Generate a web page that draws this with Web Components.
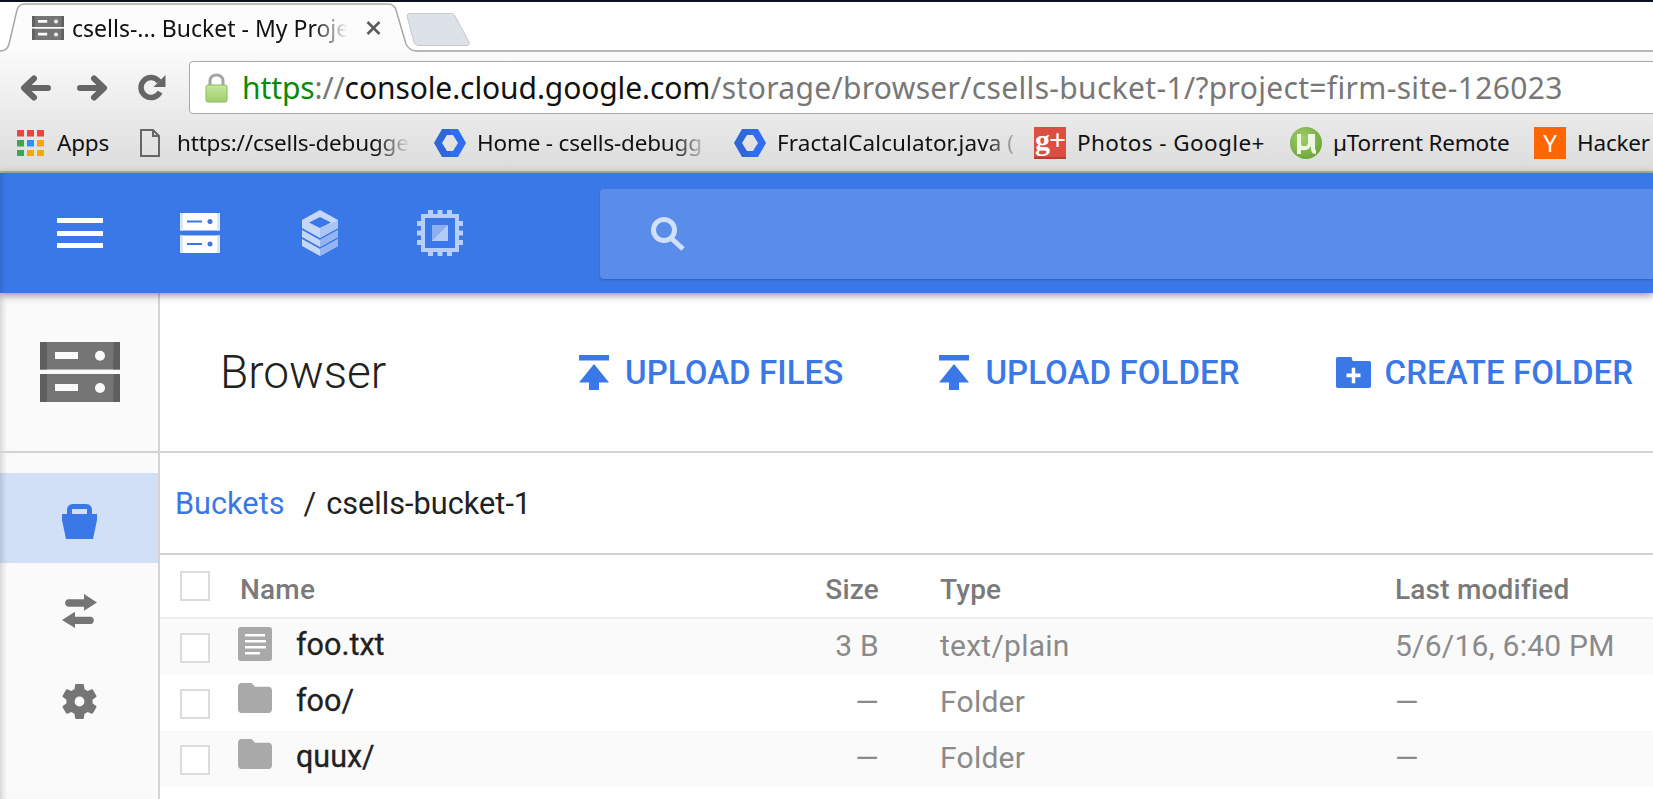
<!DOCTYPE html>
<html>
<head>
<meta charset="utf-8">
<title>csells-bucket-1 Bucket - My Project</title>
<style>
html, body { margin: 0; height: 100%; overflow: hidden; background: #fff; }
</style>
</head>
<body>
<browser-chrome></browser-chrome>
<console-topbar></console-topbar>
<console-main>
	<page-header slot="header"></page-header>
	<bucket-crumbs slot="crumbs"></bucket-crumbs>
	<file-table slot="table">
		<file-row kind="file" name="foo.txt" size="3 B" type="text/plain" modified="5/6/16, 6:40 PM" odd></file-row>
		<file-row kind="folder" name="foo/" size="—" type="Folder" modified="—"></file-row>
		<file-row kind="folder" name="quux/" size="—" type="Folder" modified="—" odd></file-row>
	</file-table>
</console-main>

<script>
const blue = '#3b78e7';
const FOLDER = 'M10 4H4c-1.1 0-2 .9-2 2v12c0 1.1.9 2 2 2h16c1.1 0 2-.9 2-2V8c0-1.1-.9-2-2-2h-8z';

const hexagon = `<svg width="32" height="28" viewBox="0 0 32 28">
	<path fill="#2f67d8" d="M8 0h8v6h-3l-5 8 5 8h3v6H8L0 14z"/>
	<path fill="#2f6ef0" d="M16 0h8l8 14-8 14h-8v-6h3l5-8-5-8h-3z"/>
</svg>`;

const icons = {
	server: `<svg width="40" height="40" viewBox="0 0 40 40">
		<path fill="#fff" d="M0 0h40v17.500H0zM0 22.500h40V40H0z"/>
		<path fill="#dbe6fb" d="M0 0h3v17.500H0zM37 0h3v17.500h-3zM0 22.500h3V40H0zM37 22.500h3V40h-3z"/>
		<path fill="${blue}" d="M7 7.500h15v2H7zM7 30h15v2H7z"/>
		<circle fill="${blue}" cx="30" cy="8.500" r="2.500"/><circle fill="${blue}" cx="30" cy="31" r="2.500"/>
	</svg>`,
	stack: `<svg width="36" height="46" viewBox="0 0 36 46">
		<path fill="#c6d8f9" d="M18 0l18 10v8L18 28 0 18v-8zm0 7L7 12.500 18 18l11-5.500z"/>
		<path fill="#a9c4f5" d="M18 28v-10l18-7.500V18z"/>
		<path fill="#c6d8f9" d="M0 20l18 10 18-10v7L18 37 0 27z"/>
		<path fill="#94b4f2" d="M18 30l18-10v7L18 37z"/>
		<path fill="#c6d8f9" d="M0 29l18 10 18-10v7L18 46 0 36z"/>
		<path fill="#94b4f2" d="M18 39l18-10v7L18 46z"/>
	</svg>`,
	chip: `<svg width="46" height="46" viewBox="0 0 46 46">
		<path fill="#b7cef8" d="M11 0h5v5h-5zM20.500 0h5v5h-5zM30 0h5v5h-5zM11 41h5v5h-5zM20.500 41h5v5h-5zM30 41h5v5h-5zM0 11h5v5H0zM0 20.500h5v5H0zM0 30h5v5H0zM41 11h5v5h-5zM41 20.500h5v5h-5zM41 30h5v5h-5z"/>
		<path fill="#b7cef8" d="M4 4h38v38H4zm4 4v30h30V8z"/>
		<path fill="#b3cbf7" d="M15 15h16v16H15z"/>
		<path fill="#8fb0f0" d="M15 15h16L15 31z"/>
	</svg>`,
	search: `<svg width="34" height="34" viewBox="0 0 34 34">
		<circle cx="13" cy="13" r="10.500" fill="none" stroke="#d1e0fa" stroke-width="5"/>
		<path d="M20 21l12 11" fill="none" stroke="#d1e0fa" stroke-width="5"/>
	</svg>`,
	upload: `<svg width="30" height="35" viewBox="0 0 30 35">
		<path fill="${blue}" d="M0 0h30v5.500H0zM15 9l15 18.500H20V35H10v-7.500H0z"/>
	</svg>`,
	createFolder: `<svg width="35" height="31" viewBox="2 4 20 16" preserveAspectRatio="none">
		<path fill="${blue}" d="M10 4H3c-.6 0-1 .4-1 1v14c0 .6.4 1 1 1h18c.6 0 1-.4 1-1V7c0-.6-.4-1-1-1h-9.500l-.5-1.500C11.300 4.200 10.700 4 10 4z"/>
		<path fill="#fff" d="M11 9.500h2v3h3v2h-3v3h-2v-3H8v-2h3z"/>
	</svg>`,
	bucket: `<svg width="35" height="35" viewBox="0 0 35 35">
		<path fill="${blue}" d="M5 10V6c0-3 2-6 6-6h13c4 0 6 3 6 6v4h5v6l-4 19H4L0 16v-6zM10 10h15V5H10z"/>
	</svg>`,
	swap: `<svg width="35" height="34" viewBox="0 0 35 34">
		<path fill="#757575" d="M6.500 5.300H22V0l13 8.500-13 8.200v-4H6.500c-4.500 0-4.500-7.400 0-7.400zM28.500 22.700H13v-5L0 26l13 8v-4h15.500c4.500 0 4.500-7.300 0-7.300z"/>
	</svg>`,
	gear: `<svg width="35" height="35" viewBox="2.400 2 19.200 20">
		<path fill="#757575" d="M19.430 12.980c.04-.32.07-.64.07-.98s-.03-.66-.07-.98l2.110-1.650c.19-.15.24-.42.12-.64l-2-3.460c-.12-.22-.39-.3-.61-.22l-2.490 1c-.52-.4-1.080-.73-1.690-.98l-.38-2.650C14.460 2.180 14.250 2 14 2h-4c-.25 0-.46.18-.49.42l-.38 2.650c-.61.25-1.170.59-1.690.98l-2.490-1c-.23-.09-.49 0-.61.22l-2 3.460c-.13.22-.07.49.12.64l2.110 1.650c-.04.32-.07.65-.07.98s.03.66.07.98l-2.110 1.650c-.19.15-.24.42-.12.64l2 3.460c.12.22.39.3.61.22l2.490-1c.52.4 1.080.73 1.690.98l.38 2.650c.03.24.24.42.49.42h4c.25 0 .46-.18.49-.42l.38-2.650c.61-.25 1.170-.59 1.690-.98l2.490 1c.23.09.49 0 .61-.22l2-3.460c.12-.22.07-.49-.12-.64l-2.110-1.650zM12 14.800a2.800 2.800 0 1 1 0-5.600 2.800 2.800 0 0 1 0 5.600z"/>
	</svg>`,
	file: `<svg width="34" height="34" viewBox="0 0 34 34">
		<rect width="34" height="34" rx="3" fill="#a9a9a9"/>
		<path fill="#fff" d="M7 7h20v2.500H7zM7 13h21v2.500H7zM7 19h21v2.500H7zM7 25h15v2.500H7z"/>
	</svg>`,
	folder: `<svg width="34" height="30" viewBox="2 4 20 16" preserveAspectRatio="none">
		<path fill="#a9a9a9" d="${FOLDER}"/>
	</svg>`
};

// favicon of the tab and the big icon in the page header are the same picture
function storageMark(width, height) {
	return `<svg width="${width}" height="${height}" viewBox="0 0 80 60">
		<path fill="#757575" d="M0 0h80v27.500H0zM0 32h80v28H0z"/>
		<path fill="#5f5f5f" d="M0 0h7v27.500H0zM0 32h7v28H0zM74 0h6v27.500h-7zM74 32h6v28h-7z"/>
		<path fill="#fafafa" d="M15 10h23v7H15zM15 42h23v7H15z"/>
		<circle fill="#fafafa" cx="60" cy="13.700" r="5"/><circle fill="#fafafa" cx="60" cy="46" r="5"/>
	</svg>`;
}

class BrowserChrome extends HTMLElement {
	constructor() {
		super();
		this.attachShadow({mode: 'open'}).innerHTML = `
	<style>
	:host {
		display: block;
		height: 173px;
		font-family: "Noto Sans", "Open Sans", sans-serif;
		color: #111;
	}
	.strip {
		display: flex;
		height: 48px;
		border-top: 2px solid #0a101c;
		border-bottom: 2px solid #b9b9b9;
		background: #fff;
		position: relative;
	}
	.tabshape {
		position: absolute;
		left: 0;
		top: 0;
	}
	.tab {
		position: relative;
		box-sizing: border-box;
		width: 406px;
		display: flex;
		align-items: center;
		padding: 3px 0 0 32px;
		flex: none;
	}
	.title {
		width: 281px;
		margin-left: 8px;
		font-size: 23px;
		white-space: nowrap;
		overflow: hidden;
		-webkit-mask-image: linear-gradient(to right, #000 86%, transparent 98%);
	}
	.close {
		margin-left: 13px;
		line-height: 0;
	}
	.newtab {
		margin-top: 11px;
		flex: none;
	}
	.tools {
		background: linear-gradient(#fafafa, #dcdcdc);
		height: 119px;
		border-bottom: 2px solid #b4b4b4;
	}
	.nav {
		display: flex;
		align-items: center;
		height: 62px;
		box-sizing: border-box;
		padding: 9px 0 0 20px;
		overflow: hidden;
	}
	.nav svg {
		flex: none;
		margin-right: 26px;
	}
	.omni {
		flex: none;
		box-sizing: border-box;
		width: 1500px;
		height: 53px;
		margin-left: 23px;
		display: flex;
		align-items: center;
		padding-left: 15px;
		background: #fff;
		border: 1px solid #a9a9a9;
		border-radius: 4px;
		font-size: 30px;
		white-space: nowrap;
		letter-spacing: -.1px;
	}
	.omni svg {
		margin-right: 14px;
	}
	.green { color: #0a8a0a; }
	.grey { color: #777; }
	.path { letter-spacing: .33px; }
	.bookmarks {
		display: flex;
		height: 57px;
		align-items: center;
		padding-left: 17px;
		overflow: hidden;
	}
	.gplus {
		width: 32px;
		height: 32px;
		background: #dc4e41;
		color: #fff;
		font: bold 30px/25px "Liberation Serif", serif;
		letter-spacing: -1px;
		text-align: center;
		box-shadow: inset 0 -2px 0 #b5402f;
	}
	.hn {
		width: 32px;
		height: 32px;
		background: #ff6600;
		color: #fff;
		font: 24px/32px "Noto Sans", sans-serif;
		text-align: center;
	}
	</style>
	<div class="strip">
		<svg class="tabshape" width="418" height="50" viewBox="0 0 418 50">
			<path d="M0 49c5 0 8-3 9-7L17 8c1-4 4-6 8-6h363c4 0 7 2 8 6l10 34c2 4 6 7 11 7v1H0z" fill="#fcfcfc"/>
			<path d="M0 49c5 0 8-3 9-7L17 8c1-4 4-6 8-6h363c4 0 7 2 8 6l10 34c2 4 6 7 11 7" fill="none" stroke="#a8a8a8" stroke-width="1.500"/>
		</svg>
		<div class="tab">
			${storageMark(32, 24)}
			<div class="title">csells-... Bucket - My Proje</div>
			<div class="close"><svg width="15" height="14" viewBox="0 0 15 14"><path d="M1.500 1l12 12M13.500 1l-12 12" stroke="#5a5a5a" stroke-width="2.500"/></svg></div>
		</div>
		<svg class="newtab" width="65" height="33" viewBox="0 0 65 33">
			<path d="M1 3c0-1.500 1-2.500 3-2.500h41c2 0 3.500 1 4 2.500l14 26c.5 2 0 3.500-2 3.500H13c-2 0-4-1-5-3z" fill="#dde1e8" stroke="#c6c8cc"/>
		</svg>
	</div>
	<div class="tools">
		<div class="nav">
			<svg width="31" height="26" viewBox="0 0 31 26"><path d="M28 13H5M14 3.500L4 13l10 9.500" fill="none" stroke="#666" stroke-width="6" stroke-linecap="round" stroke-linejoin="round"/></svg>
			<svg width="31" height="26" viewBox="0 0 31 26"><path d="M3 13h23M17 3.500L27 13l-10 9.500" fill="none" stroke="#666" stroke-width="6" stroke-linecap="round" stroke-linejoin="round"/></svg>
			<svg style="margin:0 0 0 4px" width="28" height="28" viewBox="0 0 28 28"><path d="M22 18a10 10 0 1 1-1-10.500" fill="none" stroke="#666" stroke-width="5.500"/><path d="M27.500 1v12h-12z" fill="#666"/></svg>
			<div class="omni">
				<svg width="23" height="30" viewBox="0 0 23 30">
					<defs><linearGradient id="lock" x1="0" y1="0" x2="0" y2="1"><stop offset="0" stop-color="#c4e89c"/><stop offset="1" stop-color="#a0d06c"/></linearGradient></defs>
					<path d="M5 13V8c0-8 13-8 13 0v5" fill="none" stroke="#a4a4a4" stroke-width="3"/>
					<rect x="1" y="12" width="21" height="17" rx="2" fill="url(#lock)" stroke="#8cb860"/>
				</svg>
				<span class="green">https</span><span class="grey">://</span><span>console.cloud.google.com</span><span class="grey path">/storage/browser/csells-bucket-1/?project=firm-site-126023</span>
			</div>
		</div>
		<div class="bookmarks">
			<book-mark width="123" gap="13" label="Apps">
				<svg width="27" height="26" viewBox="0 0 27 26">
					<path fill="#f44336" d="M0 0h7v6.500H0zM10 0h7v6.500h-7zM20 0h7v6.500h-7z"/>
					<path fill="#34a853" d="M0 10h7v6.500H0zM0 20h7v6.500H0z"/>
					<path fill="#2196f3" d="M10 10h7v6.500h-7z"/>
					<path fill="#f9a602" d="M20 10h7v6.500h-7zM10 20h7v6.500h-7zM20 20h7v6.500h-7z"/>
				</svg>
			</book-mark>
			<book-mark width="294" gap="17" text="233" fade label="https://csells-debugge">
				<svg width="20" height="28" viewBox="0 0 20 28"><path d="M1 1h12l6 6v20H1zM13 1v6h6" fill="none" stroke="#666" stroke-width="2"/></svg>
			</book-mark>
			<book-mark width="300" gap="11" text="231" fade label="Home - csells-debugg">${hexagon}</book-mark>
			<book-mark width="300" gap="11" text="245" fade spacing=".1" label="FractalCalculator.java (">${hexagon}</book-mark>
			<book-mark width="256" gap="11" spacing=".4" label="Photos - Google+"><div class="gplus">g+</div></book-mark>
			<book-mark width="244" gap="11" label="µTorrent Remote">
				<svg width="32" height="32" viewBox="0 0 32 32">
					<defs><radialGradient id="ball" cx=".4" cy=".35" r=".7"><stop offset="0" stop-color="#a3cf6c"/><stop offset="1" stop-color="#6aa436"/></radialGradient></defs>
					<circle cx="16" cy="16" r="16" fill="url(#ball)"/>
					<path d="M9 7v20M9 9v7c0 7 10 7 11 0V7M23 7v15c0 2 1 3 3 3" fill="none" stroke="#eef6e4" stroke-width="4"/>
				</svg>
			</book-mark>
			<book-mark width="119" gap="11" label="Hacker"><div class="hn">Y</div></book-mark>
		</div>
	</div>
	`;
	}
}

class BookMark extends HTMLElement {
	constructor() {
		super();
		var textWidth = this.getAttribute('text');
		var spacing = this.getAttribute('spacing') || '-.2';
		this.attachShadow({mode: 'open'}).innerHTML = `
	<style>
	:host {
		display: flex;
		flex: none;
		align-items: center;
		box-sizing: border-box;
		font-size: 22.500px;
		white-space: nowrap;
		letter-spacing: ${spacing}px;
	}
	.label {
		overflow: hidden;
	}
	:host([fade]) .label {
		-webkit-mask-image: linear-gradient(to right, #000 85%, transparent);
	}
	</style>
	<slot></slot>
	<div class="label" style="margin-left:${this.getAttribute('gap')}px;${textWidth ? 'width:' + textWidth + 'px' : ''}">${this.getAttribute('label')}</div>
	`;
		this.style.width = this.getAttribute('width') + 'px';
	}
}

class ConsoleTopbar extends HTMLElement {
	constructor() {
		super();
		this.attachShadow({mode: 'open'}).innerHTML = `
	<style>
	:host {
		display: flex;
		position: relative;
		z-index: 2;
		align-items: center;
		height: 120px;
		padding-left: 20px;
		background: ${blue};
		box-shadow: 0 2px 8px rgba(0,0,0,.45), inset 6px 0 6px -5px rgba(0,0,0,.2);
	}
	.cell {
		flex: none;
		width: 120px;
		display: flex;
		justify-content: center;
	}
	.burger {
		width: 46px;
		height: 30px;
		box-sizing: border-box;
		border-top: 5px solid #fff;
		border-bottom: 5px solid #fff;
		background: linear-gradient(#fff, #fff) center/100% 5px no-repeat;
	}
	.search {
		flex: 1;
		margin: 2px 0 0 100px;
		height: 90px;
		display: flex;
		align-items: center;
		padding-left: 51px;
		background: #5a8de9;
		border-radius: 4px 0 0 4px;
		box-shadow: 0 1px 2px rgba(0,0,0,.2);
	}
	</style>
	<div class="cell"><div class="burger"></div></div>
	<div class="cell">${icons.server}</div>
	<div class="cell">${icons.stack}</div>
	<div class="cell">${icons.chip}</div>
	<div class="search">${icons.search}</div>
	`;
	}
}

class ConsoleMain extends HTMLElement {
	constructor() {
		super();
		this.attachShadow({mode: 'open'}).innerHTML = `
	<style>
	:host {
		display: grid;
		grid-template-columns: 160px 1fr;
		grid-template-rows: 158px 1fr;
		height: 506px;
		font-family: Roboto, sans-serif;
		color: #212121;
	}
	.rail {
		background: #fafafa;
		border-right: 2px solid #d4d4d4;
		box-shadow: inset 7px 0 6px -5px rgba(0,0,0,.18);
	}
	.logo {
		display: flex;
		align-items: center;
		justify-content: center;
		padding-left: 2px;
		height: 158px;
	}
	.rule {
		border-top: 2px solid #d4d4d4;
	}
	.nav {
		padding-top: 20px;
		height: 326px;
	}
	.item {
		height: 90px;
		box-sizing: border-box;
		padding-top: 6px;
		display: flex;
		align-items: center;
		justify-content: center;
	}
	.on {
		background: #d2e0f7;
		box-shadow: inset 7px 0 6px -5px rgba(0,0,0,.18);
	}
	.main {
		min-width: 0;
	}
	</style>
	<div class="rail logo">${storageMark(80, 60)}</div>
	<div class="main"><slot name="header"></slot></div>
	<div class="rail rule">
		<div class="nav">
			<div class="item on">${icons.bucket}</div>
			<div class="item">${icons.swap}</div>
			<div class="item">${icons.gear}</div>
		</div>
	</div>
	<div class="main rule">
		<slot name="crumbs"></slot>
		<slot name="table"></slot>
	</div>
	`;
	}
}

class PageHeader extends HTMLElement {
	constructor() {
		super();
		this.attachShadow({mode: 'open'}).innerHTML = `
	<style>
	:host {
		display: flex;
		align-items: center;
		height: 158px;
		padding-left: 60px;
		white-space: nowrap;
		overflow: hidden;
	}
	h1 {
		flex: none;
		margin: 0 99px 0 0;
		width: 260px;
		font-size: 46px;
		font-weight: 300;
		color: #212121;
	}
	</style>
	<h1>Browser</h1>
	<action-button label="UPLOAD FILES">${icons.upload}</action-button>
	<action-button label="UPLOAD FOLDER">${icons.upload}</action-button>
	<action-button label="CREATE FOLDER" style="--gap:14px">${icons.createFolder}</action-button>
	`;
	}
}

class ActionButton extends HTMLElement {
	constructor() {
		super();
		this.attachShadow({mode: 'open'}).innerHTML = `
	<style>
	:host {
		display: inline-flex;
		align-items: center;
		flex: none;
		margin-right: 96px;
		color: ${blue};
		font-size: 33px;
		font-weight: 500;
		letter-spacing: .08px;
	}
	span {
		margin-left: var(--gap, 16px);
	}
	::slotted(svg) {
		display: block;
	}
	</style>
	<slot></slot><span>${this.getAttribute('label')}</span>
	`;
	}
}

class BucketCrumbs extends HTMLElement {
	constructor() {
		super();
		this.attachShadow({mode: 'open'}).innerHTML = `
	<style>
	:host {
		display: flex;
		align-items: center;
		height: 100px;
		padding-left: 15px;
		font-size: 30.700px;
		border-bottom: 2px solid #d4d4d4;
	}
	a { color: ${blue}; }
	i { font-style: normal; margin: 0 10px 0 19px; }
	</style>
	<a>Buckets</a><i>/</i><span>csells-bucket-1</span>
	`;
	}
}

const COLS = 'grid-template-columns: 78px 400px 241px 61px 455px 1fr;';

class FileTable extends HTMLElement {
	constructor() {
		super();
		this.attachShadow({mode: 'open'}).innerHTML = `
	<style>
	:host { display: block; }
	.head {
		display: grid;
		${COLS}
		align-items: center;
		height: 62px;
		border-bottom: 2px solid #eee;
		font-size: 28px;
		letter-spacing: .2px;
		font-weight: 500;
		color: #7a7a7a;
	}
	.head div:not(.box) { padding-top: 6px; }
	.box {
		width: 30px;
		height: 30px;
		box-sizing: border-box;
		margin-left: 20px;
		border: 2px solid #dcdcdc;
	}
	.name { padding-left: 2px; }
	.size { text-align: right; }
	</style>
	<div class="head">
		<div class="box"></div>
		<div class="name">Name</div>
		<div class="size">Size</div>
		<div></div>
		<div>Type</div>
		<div>Last modified</div>
	</div>
	<slot></slot>
	`;
	}
}

class FileRow extends HTMLElement {
	constructor() {
		super();
		var kind = this.getAttribute('kind');
		this.attachShadow({mode: 'open'}).innerHTML = `
	<style>
	:host {
		display: grid;
		${COLS}
		align-items: center;
		height: 56px;
		font-size: 30px;
		letter-spacing: .25px;
		color: #8a8a8a;
		white-space: nowrap;
	}
	:host([odd]) { background: #fafafa; }
	.cell { padding-bottom: 3px; }
	.box {
		width: 30px;
		height: 30px;
		box-sizing: border-box;
		margin: 2px 0 0 20px;
		border: 2px solid #dcdcdc;
		background: #fff;
	}
	.name {
		display: flex;
		align-items: flex-start;
		align-self: start;
		padding-top: 8px;
		color: #212121;
		font-size: 30.500px;
		font-weight: 400;
		letter-spacing: 0;
		-webkit-text-stroke: .3px #212121;
	}
	.name svg { flex: none; }
	.name span { margin: -2px 0 0 24px; line-height: 40px; }
	.size { text-align: right; }
	</style>
	<div class="box"></div>
	<div class="name">${icons[kind]}<span>${this.getAttribute('name')}</span></div>
	<div class="cell size">${this.getAttribute('size')}</div>
	<div></div>
	<div class="cell">${this.getAttribute('type')}</div>
	<div class="cell">${this.getAttribute('modified')}</div>
	`;
	}
}

customElements.define('book-mark', BookMark);
customElements.define('browser-chrome', BrowserChrome);
customElements.define('console-topbar', ConsoleTopbar);
customElements.define('action-button', ActionButton);
customElements.define('page-header', PageHeader);
customElements.define('bucket-crumbs', BucketCrumbs);
customElements.define('file-row', FileRow);
customElements.define('file-table', FileTable);
customElements.define('console-main', ConsoleMain);
</script>
</body>
</html>
